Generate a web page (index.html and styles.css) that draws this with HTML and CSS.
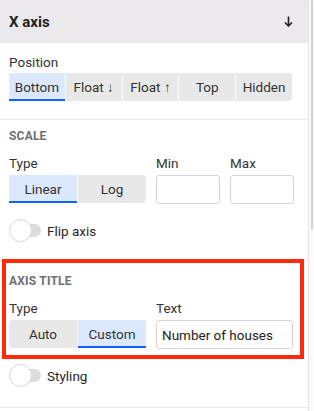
FILE: index.html
```html
<!DOCTYPE html>
<html lang="en">
<head>
    <meta charset="UTF-8">
    <title>X axis settings</title>
    <link rel="stylesheet" href="styles.css">
</head>
<body>
    <div class="frame">
        <div class="panel">
            <div class="panel-header">
                <span>X axis</span>
                <svg class="arrow" width="9" height="11" viewBox="0 0 9 11">
                    <path d="M4.5 0.5 V10 M1 6.5 L4.5 10 L8 6.5" fill="none" stroke="#222" stroke-width="1.6"/>
                </svg>
            </div>

            <!-- Position -->
            <div class="section first">
                <div class="label">Position</div>
                <div class="segmented position">
                    <button class="seg active">Bottom</button>
                    <button class="seg">Float ↓</button>
                    <button class="seg">Float ↑</button>
                    <button class="seg">Top</button>
                    <button class="seg">Hidden</button>
                </div>
            </div>

            <!-- Scale -->
            <div class="section">
                <div class="heading">SCALE</div>
                <div class="row">
                    <div class="field type">
                        <div class="label">Type</div>
                        <div class="segmented">
                            <button class="seg active">Linear</button>
                            <button class="seg">Log</button>
                        </div>
                    </div>
                    <div class="field small">
                        <div class="label">Min</div>
                        <input type="text">
                    </div>
                    <div class="field small">
                        <div class="label">Max</div>
                        <input type="text">
                    </div>
                </div>
                <div class="toggle">
                    <span class="switch"></span>
                    <span>Flip axis</span>
                </div>
            </div>

            <!-- Axis title -->
            <div class="section highlighted">
                <div class="heading">AXIS TITLE</div>
                <div class="row">
                    <div class="field type">
                        <div class="label">Type</div>
                        <div class="segmented">
                            <button class="seg">Auto</button>
                            <button class="seg active">Custom</button>
                        </div>
                    </div>
                    <div class="field wide">
                        <div class="label">Text</div>
                        <input type="text" value="Number of houses">
                    </div>
                </div>
                <div class="toggle">
                    <span class="switch"></span>
                    <span>Styling</span>
                </div>
                <div class="highlight-box"></div>
            </div>
        </div>
        <div class="scrollbar"><div class="thumb"></div></div>
    </div>
</body>
</html>
```

FILE: styles.css
```css
/* Base */
body {
    margin: 0;
    font-family: Roboto, 'Noto Sans', sans-serif;
    font-size: 13.5px;
    color: #262626;
    background: #fff;
}

.frame {
    display: flex;
    height: 411px;
    overflow: hidden;
}

.panel {
    width: 308px;
    flex-shrink: 0;
}

/* Scrollbar */
.scrollbar {
    width: 5px;
    border-left: 1px solid #e4e4e4;
    background: #fafafa;
    position: relative;
}

.thumb {
    position: absolute;
    top: 0;
    right: 1px;
    width: 2px;
    height: 230px;
    background: #d2d2d2;
    border-radius: 1px;
}

/* Header */
.panel-header {
    height: 43px;
    background: #ebe9ec;
    display: flex;
    align-items: center;
    justify-content: space-between;
    padding: 0 15px 0 9px;
    font-weight: bold;
    font-size: 15px;
    color: #222;
}

/* Sections */
.section {
    border-bottom: 1px solid #e6e6e6;
    padding: 8px 9px 18px;
}

.section.first {
    padding-top: 11px;
    padding-bottom: 18px;
}

.heading {
    font-size: 12px;
    font-weight: bold;
    color: #6f6f6f;
    height: 16px;
    line-height: 16px;
    margin-bottom: 11px;
    letter-spacing: 0.2px;
}

.label {
    height: 16px;
    line-height: 16px;
    margin-bottom: 3px;
    color: #333;
}

.field .label {
    margin-bottom: 4px;
}

.row {
    display: flex;
    gap: 10px;
}

.field.type {
    width: 137px;
}

.field.small {
    width: 64px;
}

.field.wide {
    width: 137px;
}

/* Segmented control */
.segmented {
    display: flex;
    gap: 1px;
}

.segmented.position {
    width: 283px;
}

.seg {
    flex: 1;
    height: 28px;
    border: none;
    background: #e8e8e8;
    font-family: inherit;
    font-size: 13.5px;
    color: #333;
    padding: 2px 0 0;
    border-bottom: 2px solid transparent;
}

.seg:first-child {
    border-radius: 4px 0 0 4px;
}

.seg:last-child {
    border-radius: 0 4px 4px 0;
}

.seg.active {
    background: #dbe8fd;
    border-bottom-color: #0f62fe;
    border-radius: 0;
}

/* Inputs */
input {
    box-sizing: border-box;
    width: 100%;
    height: 29px;
    border: 1px solid #d4d4d4;
    border-radius: 3px;
    font-family: inherit;
    font-size: 13.5px;
    color: #222;
    padding: 0 5px;
    outline: none;
}

/* Toggle */
.toggle {
    display: flex;
    align-items: center;
    gap: 5px;
    margin-top: 15px;
    height: 23px;
}

.switch {
    width: 33px;
    height: 23px;
    position: relative;
}

.switch::before {
    content: "";
    position: absolute;
    left: 10px;
    top: 5px;
    width: 22px;
    height: 13px;
    border-radius: 7px;
    background: #dcdcdc;
}

.switch::after {
    content: "";
    position: absolute;
    left: 0;
    top: 0;
    width: 21px;
    height: 21px;
    border-radius: 50%;
    background: #fff;
    border: 1px solid #d6d6d6;
}

/* Annotation box */
.highlighted {
    position: relative;
    padding-top: 12px;
    padding-bottom: 20px;
}

.highlight-box {
    position: absolute;
    left: 2px;
    top: -2px;
    box-sizing: border-box;
    width: 302px;
    height: 100px;
    border: 4px solid #ff2a0a;
}
```
